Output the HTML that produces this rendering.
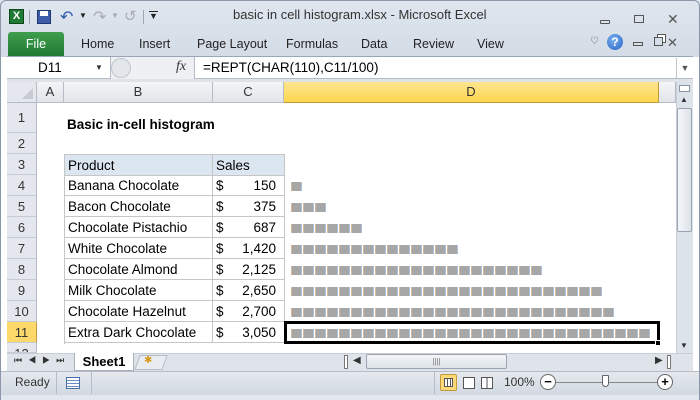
<!DOCTYPE html>
<html><head><style>
*{margin:0;padding:0;box-sizing:border-box}
body{width:700px;height:400px;overflow:hidden;background:#fff;font-family:"Liberation Sans",sans-serif;position:relative;font-size:13px;color:#000}
.a{position:absolute}
.hdr{background:linear-gradient(#f4f5f7,#e1e4e9);border-right:1px solid #b5bcc7;border-bottom:1px solid #b5bcc7;color:#333;text-align:center;font-size:13px}
.rh{left:0;width:37px;border-right:1px solid #b5bcc7;border-bottom:1px solid #c5cbd3;background:#e4e8ee;color:#333;text-align:center;font-size:13px}
.cell{border-right:1px solid #c6c6c6;border-bottom:1px solid #c6c6c6;padding-left:3px;font-size:13.5px;white-space:nowrap}
.sq{position:absolute;width:9px;height:9px;background:#a6a6a6;box-shadow:-1px 0 0 #d9b89a,1px 0 0 #a9c2dd}
</style></head><body>
<div class="a" style="left:0;top:0;width:700px;height:57px;background:linear-gradient(#dfe6ef,#d3dbe6)"></div>
<div class="a" style="left:0;top:0;width:700px;height:400px;border:1px solid #8b97a8;border-radius:6px 6px 0 0;pointer-events:none"></div>
<div class="a" style="left:9px;top:9px;width:15px;height:15px;background:#1e7a34;border:1px solid #0c4a1c;color:#fff;font-size:11px;font-weight:bold;text-align:center;line-height:13px">X</div>
<div class="a" style="left:29px;top:10px;width:1px;height:14px;background:#9aa"></div>
<div class="a" style="left:37px;top:10px;width:14px;height:14px;background:#3c5ca8;border:1px solid #1e3570"></div>
<div class="a" style="left:40px;top:11px;width:8px;height:5px;background:#fff"></div>
<div class="a" style="left:60px;top:7px;color:#2a5aa8;font-size:16px">↶</div>
<div class="a" style="left:79px;top:11px;font-size:8px;color:#222">▼</div>
<div class="a" style="left:93px;top:7px;color:#aab;font-size:16px">↷</div>
<div class="a" style="left:111px;top:11px;font-size:8px;color:#aab">▼</div>
<div class="a" style="left:124px;top:7px;color:#aab;font-size:15px">↺</div>
<div class="a" style="left:143px;top:10px;width:1px;height:14px;background:#9aa"></div>
<div class="a" style="left:149px;top:11px;font-size:9px;color:#222;border-top:1px solid #222;line-height:9px">▼</div>
<div class="a" style="left:233px;top:7px;font-size:13px;color:#333">basic in cell histogram.xlsx  -  Microsoft Excel</div>
<div class="a" style="left:600px;top:20px;width:10px;height:4px;border:1px solid #555;border-radius:1px"></div>
<div class="a" style="left:634px;top:15px;width:10px;height:8px;border:1px solid #555"></div>
<div class="a" style="left:667px;top:11px;font-size:14px;color:#555">✕</div>
<div class="a" style="left:8px;top:32px;width:56px;height:24px;background:linear-gradient(#3f9e4e,#217a33);border-radius:3px 3px 0 0;color:#fff;font-size:12.5px;text-align:center;line-height:24px">File</div>
<div class="a" style="top:37px;left:81px;font-size:12.5px;color:#222">Home</div>
<div class="a" style="top:37px;left:139px;font-size:12.5px;color:#222">Insert</div>
<div class="a" style="top:37px;left:197px;font-size:12.5px;color:#222">Page Layout</div>
<div class="a" style="top:37px;left:286px;font-size:12.5px;color:#222">Formulas</div>
<div class="a" style="top:37px;left:361px;font-size:12.5px;color:#222">Data</div>
<div class="a" style="top:37px;left:413px;font-size:12.5px;color:#222">Review</div>
<div class="a" style="top:37px;left:477px;font-size:12.5px;color:#222">View</div>
<div class="a" style="top:36px;left:590px;font-size:10px;color:#444">♡</div>
<div class="a" style="top:34px;left:607px;width:16px;height:16px;border-radius:50%;background:radial-gradient(circle at 40% 35%,#7ab0f0,#2563c4);color:#fff;font-weight:bold;font-size:12px;text-align:center;line-height:16px">?</div>
<div class="a" style="left:633px;top:42px;width:10px;height:4px;border:1px solid #555"></div>
<div class="a" style="left:654px;top:37px;width:9px;height:9px;border:1px solid #555;box-shadow:3px -3px 0 -1px #fff,3px -3px 0 0 #555"></div>
<div class="a" style="left:667px;top:35px;font-size:13px;color:#555">✕</div>
<div class="a" style="left:7px;top:56px;width:686px;height:1px;background:#9aa5b5"></div>
<div class="a" style="left:7px;top:57px;width:686px;height:22px;background:#fff;border-bottom:1px solid #b5bcc7"></div>
<div class="a" style="left:38px;top:60px;font-size:13.5px">D11</div>
<div class="a" style="left:95px;top:63px;font-size:8px;color:#333">▼</div>
<div class="a" style="left:110px;top:57px;width:85px;height:22px;background:#eef0f3;border-left:1px solid #b5bcc7;border-right:1px solid #b5bcc7"></div>
<div class="a" style="left:111px;top:58px;width:20px;height:20px;border-radius:50%;background:#e3e6ea;border:1px solid #c0c5cc"></div>
<div class="a" style="left:176px;top:59px;font-family:'Liberation Serif',serif;font-style:italic;font-size:14px;color:#333">fx</div>
<div class="a" style="left:203px;top:60px;font-size:13.5px">=REPT(CHAR(110),C11/100)</div>
<div class="a" style="left:676px;top:58px;width:17px;height:20px;border-left:1px solid #c0c5cc;font-size:9px;color:#555;text-align:center;line-height:20px">▼</div>
<div class="a" style="left:7px;top:79px;width:686px;height:3px;background:#dfe3e8"></div>
<div class="a" style="left:7px;top:82px;width:30px;height:21px;background:#e4e8ee;border-right:1px solid #b5bcc7;border-bottom:1px solid #b5bcc7"></div>
<div class="a" style="left:22px;top:88px;width:0;height:0;border-left:11px solid transparent;border-bottom:11px solid #c8ccd2"></div>
<div class="a hdr" style="left:37px;top:82px;width:27px;height:21px;line-height:20px">A</div>
<div class="a hdr" style="left:64px;top:82px;width:149px;height:21px;line-height:20px">B</div>
<div class="a hdr" style="left:213px;top:82px;width:71px;height:21px;line-height:20px">C</div>
<div class="a hdr" style="left:284px;top:82px;width:375px;height:21px;line-height:20px;background:linear-gradient(#fde58f,#fdd74f);border-right:1px solid #c29a3a;border-bottom:1px solid #c29a3a">D</div>
<div class="a hdr" style="left:659px;top:82px;width:17px;height:21px"></div>
<div class="a rh" style="left:7px;width:30px;top:103px;height:30px;line-height:30px">1</div>
<div class="a rh" style="left:7px;width:30px;top:133px;height:21px;line-height:21px">2</div>
<div class="a rh" style="left:7px;width:30px;top:154px;height:21px;line-height:21px">3</div>
<div class="a rh" style="left:7px;width:30px;top:175px;height:21px;line-height:21px">4</div>
<div class="a rh" style="left:7px;width:30px;top:196px;height:21px;line-height:21px">5</div>
<div class="a rh" style="left:7px;width:30px;top:217px;height:21px;line-height:21px">6</div>
<div class="a rh" style="left:7px;width:30px;top:238px;height:21px;line-height:21px">7</div>
<div class="a rh" style="left:7px;width:30px;top:259px;height:21px;line-height:21px">8</div>
<div class="a rh" style="left:7px;width:30px;top:280px;height:21px;line-height:21px">9</div>
<div class="a rh" style="left:7px;width:30px;top:301px;height:21px;line-height:21px">10</div>
<div class="a rh" style="left:7px;width:30px;top:322px;height:21px;line-height:21px;background:#fcd96a;border-right:1px solid #c29a3a">11</div>
<div class="a rh" style="left:7px;width:30px;top:343px;height:10px;line-height:21px;overflow:hidden">12</div>
<div class="a" style="left:67px;top:117px;font-weight:bold;font-size:13.5px">Basic in-cell histogram</div>
<div class="a" style="left:64px;top:154px;width:221px;height:190px;border-left:1px solid #c6c6c6;border-top:1px solid #c6c6c6"></div>
<div class="a cell" style="left:64px;top:154px;width:149px;height:22px;line-height:21px;background:#dce6f1;border-top:1px solid #c6c6c6;border-left:1px solid #c6c6c6">Product</div>
<div class="a cell" style="left:213px;top:154px;width:72px;height:22px;line-height:21px;background:#dce6f1;border-top:1px solid #c6c6c6">Sales</div>
<div id="rows"></div>
<div id="sq"></div>
<div class="a" style="left:284px;top:321px;width:376px;height:23px;border:3px solid #000"></div>
<div class="a" style="left:655px;top:340px;width:6px;height:6px;background:#000;border:1px solid #fff"></div>
<div class="a" style="left:676px;top:82px;width:17px;height:271px;background:#dde3ea;border-left:1px solid #c7ced8"></div>
<div class="a" style="left:679px;top:85px;width:11px;height:7px;border:1px solid #8a94a3;background:#fff"></div>
<div class="a" style="left:680px;top:95px;font-size:8px;color:#333">▲</div>
<div class="a" style="left:677px;top:108px;width:15px;height:124px;border:1px solid #9aa4b2;border-radius:2px;background:linear-gradient(90deg,#f4f6f9,#dde2e9)"></div>
<div class="a" style="left:680px;top:341px;font-size:8px;color:#333">▼</div>
<div class="a" style="left:7px;top:353px;width:686px;height:18px;background:#dfe4ea;border-top:1px solid #c7ced8"></div>
<div class="a" style="left:14px;top:355px;font-size:9px;color:#333;letter-spacing:6px">⏮◀▶⏭</div>
<div class="a" style="left:74px;top:353px;width:60px;height:18px;background:#fff;border:1px solid #a9b1bc;border-top:none;font-weight:bold;font-size:13px;text-align:center;line-height:17px">Sheet1</div>
<div class="a" style="left:137px;top:355px;width:28px;height:15px;border:1px solid #b5bcc7;background:#e9edf2;transform:skewX(-20deg)"></div>
<div class="a" style="left:144px;top:355px;font-size:10px;color:#d59b1a">✱</div>
<div class="a" style="left:344px;top:355px;width:4px;height:14px;border:1px solid #777;background:#fff"></div>
<div class="a" style="left:353px;top:355px;font-size:10px;color:#333">◀</div>
<div class="a" style="left:366px;top:354px;width:141px;height:15px;border:1px solid #9aa4b2;border-radius:2px;background:linear-gradient(#f4f6f9,#dde2e9);text-align:center;font-size:8px;color:#777;line-height:13px">||||</div>
<div class="a" style="left:655px;top:355px;font-size:10px;color:#333">▶</div>
<div class="a" style="left:667px;top:355px;width:4px;height:14px;border:1px solid #777;background:#fff"></div>
<div class="a" style="left:1px;top:371px;width:698px;height:24px;background:linear-gradient(#e5e9ee,#d2d9e2);border-top:1px solid #b5bcc7"></div>
<div class="a" style="left:15px;top:375px;font-size:12px;color:#333">Ready</div>
<div class="a" style="left:56px;top:372px;width:1px;height:22px;background:#b5bcc7"></div>
<div class="a" style="left:66px;top:377px;width:14px;height:12px;border:1px solid #4a6ea8;background:repeating-linear-gradient(#fff 0 2px,#6a8cc8 2px 3px)"></div>
<div class="a" style="left:91px;top:372px;width:1px;height:22px;background:#b5bcc7"></div>
<div class="a" style="left:434px;top:372px;width:1px;height:22px;background:#b5bcc7"></div>
<div class="a" style="left:440px;top:374px;width:17px;height:17px;background:#fbd978;border:1px solid #c29a3a;border-radius:2px"></div>
<div class="a" style="left:444px;top:378px;width:9px;height:9px;border:1px solid #555;background:repeating-linear-gradient(90deg,#fff 0 2px,#555 2px 3px)"></div>
<div class="a" style="left:463px;top:377px;width:12px;height:12px;border:1px solid #555;background:#fff"></div>
<div class="a" style="left:481px;top:377px;width:12px;height:12px;border:1px solid #555;background:linear-gradient(90deg,#fff 45%,#555 45% 55%,#fff 55%)"></div>
<div class="a" style="left:504px;top:375px;font-size:12px;color:#333">100%</div>
<div class="a" style="left:540px;top:374px;width:16px;height:16px;border:1px solid #666;border-radius:50%;background:#fff;text-align:center;line-height:13px;font-weight:bold;font-size:13px">−</div>
<div class="a" style="left:556px;top:382px;width:104px;height:1px;background:#888"></div>
<div class="a" style="left:602px;top:375px;width:7px;height:12px;border:1px solid #666;background:#fff;border-radius:1px 1px 4px 4px"></div>
<div class="a" style="left:657px;top:374px;width:16px;height:16px;border:1px solid #666;border-radius:50%;background:#fff;text-align:center;line-height:14px;font-weight:bold;font-size:13px">+</div>
<div class="a" style="left:1px;top:395px;width:698px;height:5px;background:#e3e8ef"></div>
<script>
var d=[["Banana Chocolate","150"],["Bacon Chocolate","375"],["Chocolate Pistachio","687"],["White Chocolate","1,420"],["Chocolate Almond","2,125"],["Milk Chocolate","2,650"],["Chocolate Hazelnut","2,700"],["Extra Dark Chocolate","3,050"]];
var n=[1,3,6,14,21,26,27,30],h="",s="";
d.forEach(function(r,i){var t=175+i*21;
h+='<div class="a cell" style="left:64px;top:'+t+'px;width:149px;height:21px;line-height:21px;border-left:1px solid #c6c6c6">'+r[0]+'</div>';
h+='<div class="a cell" style="left:213px;top:'+t+'px;width:72px;height:21px;line-height:21px">$<span style="position:absolute;right:8px">'+r[1]+'</span></div>';
for(var k=0;k<n[i];k++)s+='<div class="sq" style="left:'+(292+k*12)+'px;top:'+(t+7)+'px"></div>';});
document.getElementById("rows").innerHTML=h;document.getElementById("sq").innerHTML=s;
</script>
</body></html>
